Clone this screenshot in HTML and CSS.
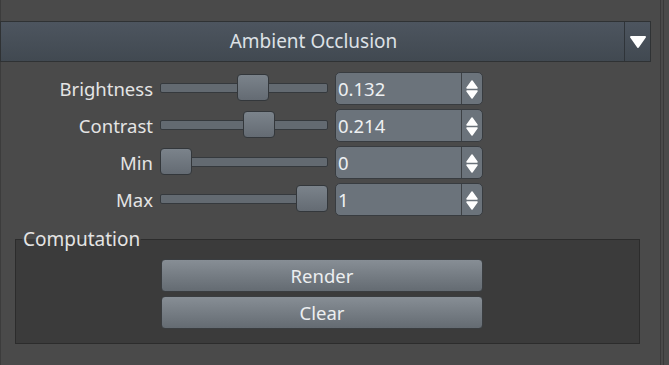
FILE: index.html
```html
<!DOCTYPE html>
<html lang="en">

<head>
    <meta charset="UTF-8">
    <meta name="viewport" content="width=device-width, initial-scale=1.0">
    <title>Ambient Occlusion</title>
    <link rel="stylesheet" href="styles.css">
</head>

<body>
    <div class="window">
        <div class="panel">
            <div class="header">
                <div class="title">Ambient Occlusion</div>
                <div class="drop">
                    <svg width="18" height="14" viewBox="0 0 18 14">
                        <path d="M2 2 L16 2 L9 12 Z" fill="#fff" stroke="#fff" stroke-width="2" stroke-linejoin="round" />
                    </svg>
                </div>
            </div>

            <div class="rows">
                <div class="row">
                    <span class="label">Brightness</span>
                    <div class="slider">
                        <div class="groove"></div>
                        <div class="handle" style="left: 77px"></div>
                    </div>
                    <div class="spin">
                        <span class="value">0.132</span>
                        <div class="arrows">
                            <svg width="14" height="26" viewBox="0 0 14 26">
                                <path d="M2 12 L12 12 L7 5 Z" fill="#fff" stroke="#fff" stroke-width="1.5" stroke-linejoin="round" />
                                <path d="M2 15 L12 15 L7 22 Z" fill="#fff" stroke="#fff" stroke-width="1.5" stroke-linejoin="round" />
                            </svg>
                        </div>
                    </div>
                </div>
                <div class="row">
                    <span class="label">Contrast</span>
                    <div class="slider">
                        <div class="groove"></div>
                        <div class="handle" style="left: 83px"></div>
                    </div>
                    <div class="spin">
                        <span class="value">0.214</span>
                        <div class="arrows">
                            <svg width="14" height="26" viewBox="0 0 14 26">
                                <path d="M2 12 L12 12 L7 5 Z" fill="#fff" stroke="#fff" stroke-width="1.5" stroke-linejoin="round" />
                                <path d="M2 15 L12 15 L7 22 Z" fill="#fff" stroke="#fff" stroke-width="1.5" stroke-linejoin="round" />
                            </svg>
                        </div>
                    </div>
                </div>
                <div class="row">
                    <span class="label">Min</span>
                    <div class="slider">
                        <div class="groove"></div>
                        <div class="handle" style="left: 0px"></div>
                    </div>
                    <div class="spin">
                        <span class="value">0</span>
                        <div class="arrows">
                            <svg width="14" height="26" viewBox="0 0 14 26">
                                <path d="M2 12 L12 12 L7 5 Z" fill="#fff" stroke="#fff" stroke-width="1.5" stroke-linejoin="round" />
                                <path d="M2 15 L12 15 L7 22 Z" fill="#fff" stroke="#fff" stroke-width="1.5" stroke-linejoin="round" />
                            </svg>
                        </div>
                    </div>
                </div>
                <div class="row">
                    <span class="label">Max</span>
                    <div class="slider">
                        <div class="groove"></div>
                        <div class="handle" style="left: 136px"></div>
                    </div>
                    <div class="spin">
                        <span class="value">1</span>
                        <div class="arrows">
                            <svg width="14" height="26" viewBox="0 0 14 26">
                                <path d="M2 12 L12 12 L7 5 Z" fill="#fff" stroke="#fff" stroke-width="1.5" stroke-linejoin="round" />
                                <path d="M2 15 L12 15 L7 22 Z" fill="#fff" stroke="#fff" stroke-width="1.5" stroke-linejoin="round" />
                            </svg>
                        </div>
                    </div>
                </div>
            </div>

            <fieldset class="group">
                <legend>Computation</legend>
                <button>Render</button>
                <button>Clear</button>
            </fieldset>
        </div>
    </div>
</body>

</html>
```

FILE: styles.css
```css
* {
    margin: 0;
    padding: 0;
    box-sizing: border-box;
}

html,
body {
    width: 669px;
    height: 365px;
    overflow: hidden;
}

body {
    background: #4a4a4a;
    font-family: "Noto Sans", "DejaVu Sans", sans-serif;
    font-size: 18.5px;
    color: #e4e4e4;
}

.window {
    height: 365px;
    width: 664px;
    border-left: 1px solid #3c3c3c;
    border-right: 1px solid #393939;
}

.panel {
    height: 365px;
    width: 660px;
    border-right: 1px solid #393939;
    padding-top: 21px;
}

.header {
    display: flex;
    width: 651px;
    height: 41px;
    margin-left: -1px;
    border: 1px solid #2f3234;
    background: linear-gradient(#4d555f, #414951);
}

.title {
    flex: 1;
    text-align: center;
    line-height: 39px;
    color: #dde1e6;
    padding-left: 2px;
    font-size: 19px;
}

.drop {
    width: 26px;
    border-left: 1px solid #2f3439;
    display: flex;
    align-items: center;
    justify-content: center;
}

.rows {
    margin-top: 10px;
    display: flex;
    flex-direction: column;
    gap: 4px;
}

.row {
    display: grid;
    grid-template-columns: 152px 168px 148px;
    column-gap: 7px;
    height: 33px;
    align-items: center;
}

.label {
    text-align: right;
}

.slider {
    position: relative;
    height: 33px;
}

.groove {
    margin-top: 11px;
    height: 10px;
    border: 1px solid #35393d;
    border-radius: 2px;
    background: #636a71;
}

.handle {
    position: absolute;
    top: 2px;
    width: 32px;
    height: 27px;
    border: 1px solid #33373b;
    border-radius: 4px;
    background: linear-gradient(#7b838b, #646b73);
}

.spin {
    display: flex;
    height: 33px;
    border: 1px solid #383c40;
    border-radius: 5px;
    background: #6b737b;
}

.value {
    flex: 1;
    line-height: 31px;
    padding-left: 2px;
    color: #eef0f2;
}

.arrows {
    width: 21px;
    border-left: 1px solid #3d4145;
    display: flex;
    align-items: center;
    justify-content: center;
}

.group {
    margin: 10px 0 0 14px;
    width: 625px;
    height: 118px;
    border: 1px solid #2c2c2c;
    background: #3b3b3b;
    display: flex;
    flex-direction: column;
    align-items: flex-start;
    gap: 4px;
    padding: 7px 0 0 145px;
}

.group legend {
    margin-left: -139px;
    padding: 0 1px;
    color: #e4e4e4;
    font-size: 19px;
}

button {
    width: 322px;
    height: 33px;
    border: 1px solid #3a3d40;
    border-radius: 4px;
    background: linear-gradient(#878e95, #646b72);
    font-family: inherit;
    font-size: 18.5px;
    color: #eceef0;
}
```
